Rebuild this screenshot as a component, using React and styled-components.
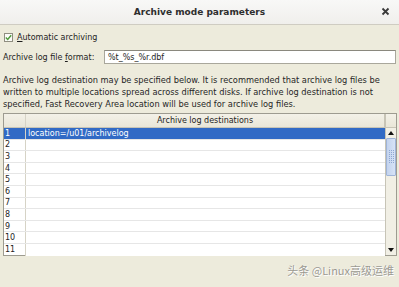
import React from 'react';
import styled, { createGlobalStyle } from 'styled-components';

const Global = createGlobalStyle`
  html, body {
    margin: 0;
    padding: 0;
    background: #edebdc;
  }
  * { box-sizing: border-box; }
`;

const Dialog = styled.div`
  width: 399px;
  height: 287px;
  display: flex;
  flex-direction: column;
  background: #edebdc;
  font-family: "DejaVu Sans", sans-serif;
  font-size: 8px;
  color: #1e1e1e;
  overflow: hidden;
  position: relative;
`;

const TitleBar = styled.div`
  height: 25px;
  flex: 0 0 25px;
  display: flex;
  align-items: center;
  justify-content: center;
  position: relative;
  background: linear-gradient(#f8f8f7, #f0efec);
  border-bottom: 1px solid #cfccc2;
  font-weight: bold;
  font-size: 9px;
  color: #2e2e2e;
`;

const Close = styled.span`
  position: absolute;
  right: 9px;
  top: 7px;
  width: 9px;
  height: 9px;
  display: flex;
`;

const Body = styled.div`
  flex: 1;
  display: flex;
  flex-direction: column;
  padding: 8px 3px 0 3px;
`;

const CheckRow = styled.label`
  display: flex;
  align-items: center;
  gap: 4px;
  padding-left: 1px;
  height: 9px;
`;

const CheckBox = styled.span`
  width: 9px;
  height: 9px;
  border: 1px solid #8f8d80;
  background: #fbfbf8;
  display: flex;
  align-items: center;
  justify-content: center;
`;

const FormatRow = styled.div`
  display: flex;
  align-items: center;
  margin-top: 8px;
  height: 14px;
`;

const FieldLabel = styled.span`
  width: 101px;
`;

const TextField = styled.div`
  flex: 1;
  height: 14px;
  border: 1px solid #a9a79c;
  border-top-color: #8a887e;
  background: #fff;
  padding: 0 3px;
  display: flex;
  align-items: center;
`;

const Paragraph = styled.p`
  margin: 10px 0 0 0;
  font-size: 8.25px;
  line-height: 12px;
  color: #262626;
`;

const Table = styled.div`
  margin-top: 3px;
  width: 394px;
  height: 143px;
  border: 1px solid #9d9b90;
  display: flex;
  background: #fff;
`;

const Grid = styled.div`
  flex: 1;
  display: flex;
  flex-direction: column;
`;

const HeaderRow = styled.div`
  display: flex;
  height: 14px;
  flex: 0 0 14px;
  background: linear-gradient(#f3f1e8, #e9e6d8);
  border-bottom: 1px solid #c7c4b6;
`;

const NumCell = styled.div`
  width: 22px;
  flex: 0 0 22px;
  border-right: 1px solid #d6d3c6;
  padding-left: 1px;
  display: flex;
  align-items: center;
  background: ${p => p.$selected ? '#316ac5' : 'transparent'};
  color: ${p => p.$selected ? '#fff' : '#1e1e1e'};
`;

const HeadTitle = styled.div`
  flex: 1;
  display: flex;
  align-items: center;
  justify-content: center;
  border-right: 1px solid #c7c4b6;
`;

const Row = styled.div`
  display: flex;
  height: 11.6px;
  flex: 0 0 11.6px;
  border-bottom: 1px solid #e6e6e6;
  &:last-child { border-bottom: none; }
`;

const ValueCell = styled.div`
  flex: 1;
  display: flex;
  align-items: center;
  padding-left: 2px;
  background: ${p => p.$selected ? '#316ac5' : '#fff'};
  color: ${p => p.$selected ? '#fff' : '#1e1e1e'};
`;

const ScrollBar = styled.div`
  width: 11px;
  flex: 0 0 11px;
  display: flex;
  flex-direction: column;
  background: #f1efe5;
  border-left: 1px solid #c7c4b6;
`;

const ScrollCap = styled.div`
  height: 14px;
  flex: 0 0 14px;
  background: linear-gradient(#f3f1e8, #e9e6d8);
  border-bottom: 1px solid #c7c4b6;
`;

const ArrowBtn = styled.div`
  height: 10px;
  flex: 0 0 10px;
  display: flex;
  align-items: center;
  justify-content: center;
`;

const Thumb = styled.div`
  height: 38px;
  flex: 0 0 38px;
  border: 1px solid #9fb4d8;
  border-radius: 1px;
  background: linear-gradient(90deg, #c3d3ee, #d7e3f6);
  display: flex;
  align-items: center;
  justify-content: center;
`;

const Track = styled.div`
  flex: 1;
`;

const Watermark = styled.div`
  position: absolute;
  right: 5px;
  bottom: 9px;
  font-family: "Noto Sans CJK SC", "DejaVu Sans", sans-serif;
  font-size: 11px;
  color: #9a988f;
  text-shadow: 0 0 1px #fff, 1px 1px 0 #fff;
`;

const rows = ['location=/u01/archivelog', '', '', '', '', '', '', '', '', '', ''];

export default function App() {
  return (
    <Dialog>
      <Global />
      <TitleBar>
        Archive mode parameters
        <Close>
          <svg width="9" height="9" viewBox="0 0 9 9">
            <path d="M1.5 1.5L7.5 7.5M7.5 1.5L1.5 7.5" stroke="#3a3a3a" strokeWidth="1.8" />
          </svg>
        </Close>
      </TitleBar>
      <Body>
        <CheckRow>
          <CheckBox>
            <svg width="7" height="7" viewBox="0 0 7 7">
              <path d="M0.8 3.6L2.7 5.5L6.2 1.2" stroke="#4e9a3a" strokeWidth="1.4" fill="none" />
            </svg>
          </CheckBox>
          <span><u>A</u>utomatic archiving</span>
        </CheckRow>
        <FormatRow>
          <FieldLabel>Archive log file <u>f</u>ormat:</FieldLabel>
          <TextField>%t_%s_%r.dbf</TextField>
        </FormatRow>
        <Paragraph>
          Archive log destination may be specified below. It is recommended that archive log files be
          written to multiple locations spread across different disks. If archive log destination is not
          specified, Fast Recovery Area location will be used for archive log files.
        </Paragraph>
        <Table>
          <Grid>
            <HeaderRow>
              <NumCell />
              <HeadTitle>Archive log destinations</HeadTitle>
            </HeaderRow>
            {rows.map((value, i) => (
              <Row key={i}>
                <NumCell $selected={i === 0}>{i + 1}</NumCell>
                <ValueCell $selected={i === 0}>{value}</ValueCell>
              </Row>
            ))}
          </Grid>
          <ScrollBar>
            <ScrollCap />
            <ArrowBtn>
              <svg width="6" height="4" viewBox="0 0 6 4"><path d="M0 4L3 0L6 4Z" fill="#111" /></svg>
            </ArrowBtn>
            <Thumb>
              <svg width="5" height="14" viewBox="0 0 5 14">
                {[0, 2, 4, 6, 8, 10, 12].map(y => (
                  <g key={y}>
                    <rect x="0" y={y} width="1" height="1" fill="#8ea7d2" />
                    <rect x="2" y={y} width="1" height="1" fill="#8ea7d2" />
                    <rect x="4" y={y} width="1" height="1" fill="#8ea7d2" />
                  </g>
                ))}
              </svg>
            </Thumb>
            <Track />
            <ArrowBtn>
              <svg width="6" height="4" viewBox="0 0 6 4"><path d="M0 0L6 0L3 4Z" fill="#111" /></svg>
            </ArrowBtn>
          </ScrollBar>
        </Table>
      </Body>
      <Watermark>头条 @Linux高级运维</Watermark>
    </Dialog>
  );
}
